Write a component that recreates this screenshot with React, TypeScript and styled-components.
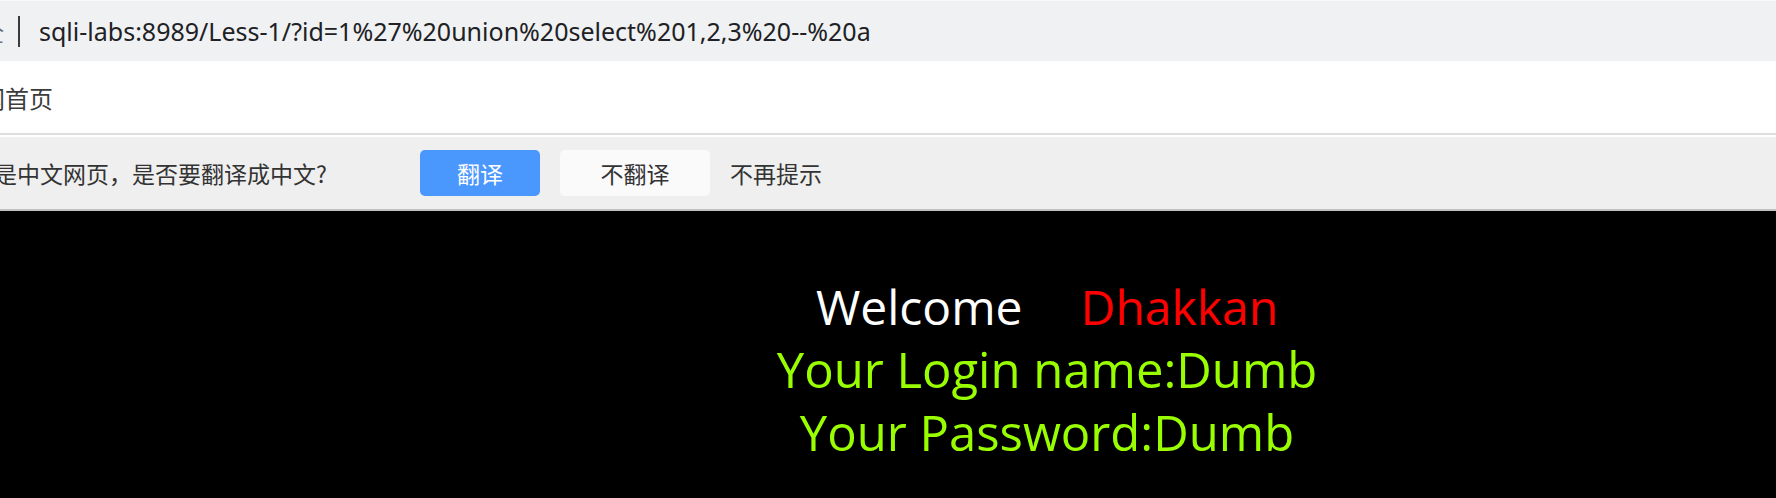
import React from "react";
import styled, { createGlobalStyle } from "styled-components";

const GlobalStyle = createGlobalStyle`
  html, body { margin: 0; padding: 0; background: #000; }
  body { width: 1776px; height: 498px; overflow: hidden; }
  #root { width: 1776px; }
`;

const UI_FONT = `"Noto Sans", "Noto Sans CJK SC", sans-serif`;
const CJK_FONT = `"Noto Sans CJK SC", "Noto Sans", sans-serif`;

const Shell = styled.div`
  display: flex;
  flex-direction: column;
  width: 1776px;
  height: 498px;
  overflow: hidden;
`;

const AddressBar = styled.div`
  display: flex;
  align-items: center;
  height: 60px;
  border-top: 1px solid #f8f8f9;
  background: #f0f1f3;
  overflow: hidden;
  font-family: ${UI_FONT};
`;

/* shows only the trailing sliver of a label that continues off the left edge */
const Clip = styled.span<{ $w: number }>`
  display: inline-flex;
  justify-content: flex-end;
  flex: none;
  width: ${(p) => p.$w}px;
  overflow: hidden;
  white-space: nowrap;
`;

const SecurityLabel = styled.span`
  font-family: ${CJK_FONT};
  font-size: 23px;
  color: #6b7079;
`;

const Divider = styled.span`
  flex: none;
  width: 2px;
  height: 31px;
  margin-left: 14px;
  background: #3c3c3c;
`;

const Url = styled.span`
  margin-left: 19px;
  font-size: 25px;
  color: #202124;
  white-space: nowrap;
`;

const BookmarkBar = styled.div`
  display: flex;
  align-items: center;
  height: 72px;
  background: #fff;
  border-bottom: 2px solid #dedede;
  overflow: hidden;
  font-family: ${CJK_FONT};
  font-size: 24px;
  color: #3c3c3c;
`;

const Bookmark = styled.span`
  white-space: nowrap;
`;

const Gap = styled.div`
  height: 2px;
  background: #fff;
`;

const TranslateBar = styled.div`
  display: flex;
  align-items: center;
  gap: 20px;
  height: 72px;
  background: #efefef;
  border-bottom: 2px solid #c2c2c2;
  font-family: ${CJK_FONT};
  font-size: 23px;
  color: #333;
  overflow: hidden;
`;

const Prompt = styled.span`
  flex: none;
  margin-left: -6px;
  width: 406px;
  white-space: nowrap;
`;

const Button = styled.button<{ $primary?: boolean }>`
  display: flex;
  flex: none;
  align-items: center;
  justify-content: center;
  width: ${(p) => (p.$primary ? "120px" : "150px")};
  height: 46px;
  border: none;
  border-radius: 5px;
  padding: 0;
  font-family: ${CJK_FONT};
  font-size: 23px;
  background: ${(p) => (p.$primary ? "#4a97fd" : "#fafafa")};
  color: ${(p) => (p.$primary ? "#fff" : "#333")};
`;

const Dismiss = styled.span`
  white-space: nowrap;
`;

const Page = styled.main`
  flex: 1;
  background: #000;
  padding: 64px 0 0 318px;
  font-family: "Open Sans", "Noto Sans", sans-serif;
  text-align: center;
`;

const Welcome = styled.div`
  font-size: 48px;
  line-height: 63px;
  color: #fff;
  white-space: pre;
`;

const Name = styled.span`
  margin-left: 58px;
  color: #ff0000;
`;

const Result = styled.div`
  font-size: 49px;
  line-height: 63px;
  color: #99ff00;
`;

export default function App() {
  return (
    <>
      <GlobalStyle />
      <Shell>
        <AddressBar>
          <Clip $w={4}>
            <SecurityLabel>不安全</SecurityLabel>
          </Clip>
          <Divider />
          <Url>sqli-labs:8989/Less-1/?id=1%27%20union%20select%201,2,3%20--%20a</Url>
        </AddressBar>
        <BookmarkBar>
          <Clip $w={5}>
            <Bookmark>网</Bookmark>
          </Clip>
          <Bookmark>首页</Bookmark>
        </BookmarkBar>
        <Gap />
        <TranslateBar>
          <Prompt>是中文网页，是否要翻译成中文?</Prompt>
          <Button $primary>翻译</Button>
          <Button>不翻译</Button>
          <Dismiss>不再提示</Dismiss>
        </TranslateBar>
        <Page>
          <Welcome>
            Welcome<Name>Dhakkan</Name>
          </Welcome>
          <Result>Your Login name:Dumb</Result>
          <Result>Your Password:Dumb</Result>
        </Page>
      </Shell>
    </>
  );
}
